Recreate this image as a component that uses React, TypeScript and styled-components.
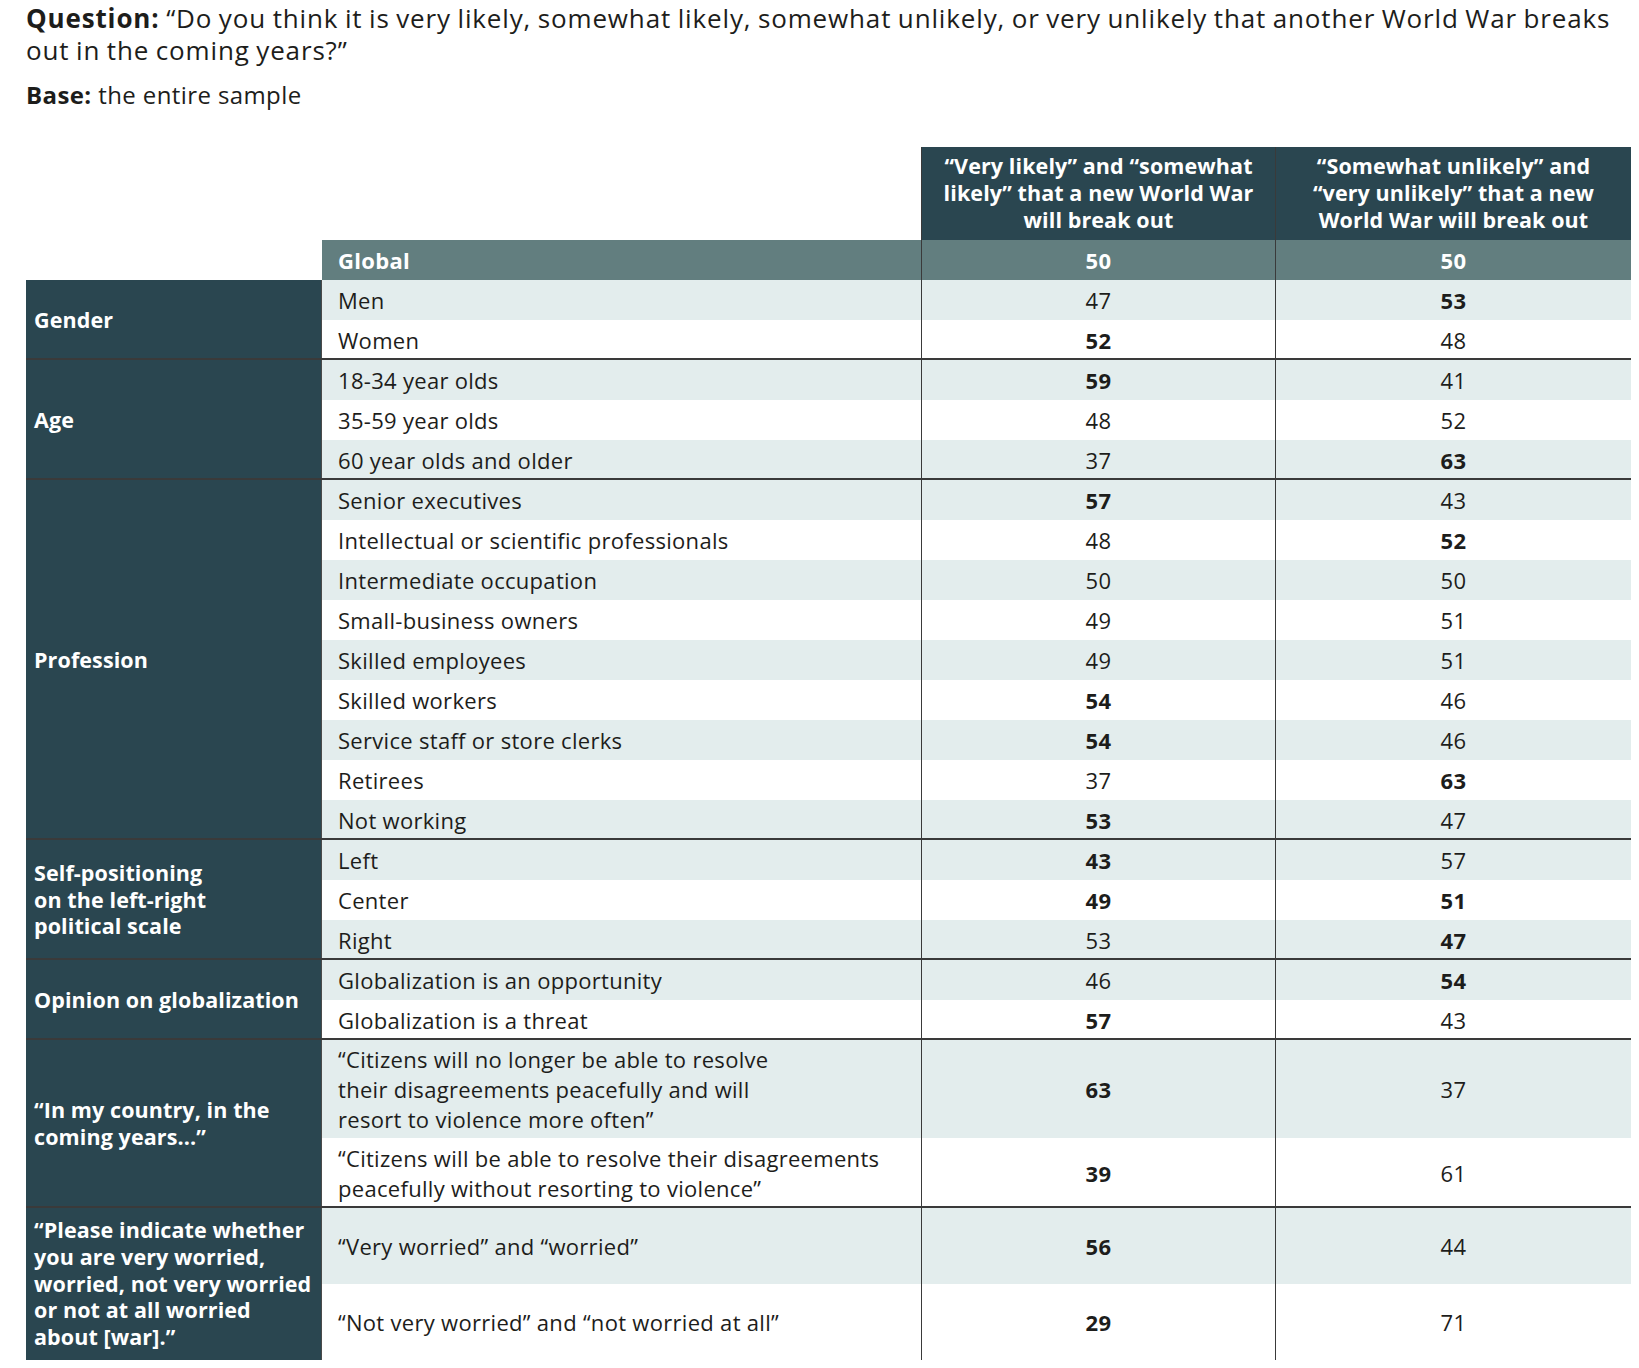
import React from 'react';
import styled, { createGlobalStyle } from 'styled-components';

const GlobalStyle = createGlobalStyle`
  body {
    margin: 0;
    background: #ffffff;
  }
`;

const DARK = '#2a4650';
const MID = '#627e7f';
const LIGHT = '#e3eded';
const LINE = '#3a3a3a';
const INK = '#1d1d1b';

const Page = styled.div`
  padding: 3px 8px 9px 26px;
  font-family: 'Open Sans', 'Liberation Sans', sans-serif;
  color: ${INK};
`;

const Question = styled.h1`
  margin: 0;
  font-size: 26px;
  line-height: 31.5px;
  font-weight: 500;
  letter-spacing: 0.85px;
  word-spacing: -1px;
`;

const Base = styled.p`
  margin: 14px 0 0;
  font-size: 24px;
  line-height: 30px;
  font-weight: 400;
  letter-spacing: 0.4px;
`;

const Strong = styled.strong`
  font-weight: 700;
`;

const Table = styled.div`
  margin-top: 37px;
  width: 1605px;
  letter-spacing: 0.3px;
`;

const Cols = styled.div`
  display: grid;
  grid-template-columns: 599px 354px 356px;
`;

const HeaderRow = styled(Cols)`
  margin-left: 296px;
`;

const HeaderCell = styled.div`
  background: ${DARK};
  color: #fff;
  font-weight: 700;
  font-size: 21.5px;
  line-height: 26.7px;
  letter-spacing: 0.1px;
  text-align: center;
  height: 93px;
  display: flex;
  align-items: center;
  justify-content: center;
  border-left: 1px solid ${LINE};
`;

const Blank = styled.div``;

const GlobalRow = styled(Cols)`
  margin-left: 296px;
  height: 40px;
  background: ${MID};
  color: #fff;
  font-weight: 700;
  font-size: 22px;
`;

const Group = styled.div`
  position: relative;
  display: flex;
  & + & {
    border-top: 2px solid ${LINE};
    margin-top: -2px;
  }
`;

const Category = styled.div`
  width: 296px;
  flex-shrink: 0;
  box-sizing: border-box;
  background: ${DARK};
  color: #fff;
  font-weight: 700;
  font-size: 21.5px;
  line-height: 26.7px;
  letter-spacing: 0.1px;
  padding: 0 6px 0 8px;
  display: flex;
  align-items: center;
  border-right: 1px solid #4a4a4a;
`;

const Rows = styled.div`
  flex: 1;
  display: flex;
  flex-direction: column;
`;

const Row = styled(Cols)<{ $shade: boolean; $h: number }>`
  height: ${p => p.$h}px;
  background: ${p => (p.$shade ? LIGHT : '#fff')};
  font-size: 22px;
`;

const Label = styled.div<{ $strong?: boolean }>`
  display: flex;
  align-items: center;
  padding-left: 16px;
  line-height: 30px;
  font-weight: ${p => (p.$strong ? 700 : 400)};
`;

const Value = styled.div<{ $bold?: boolean }>`
  display: flex;
  align-items: center;
  justify-content: center;
  border-left: 1px solid ${LINE};
  font-weight: ${p => (p.$bold ? 700 : 400)};
`;

type RowData = {
  label: React.ReactNode;
  a: number;
  b: number;
  ba?: boolean;
  bb?: boolean;
  h?: number;
};

type GroupData = {
  title: React.ReactNode;
  rows: RowData[];
};

const groups: GroupData[] = [
  {
    title: 'Gender',
    rows: [
      { label: 'Men', a: 47, b: 53, bb: true },
      { label: 'Women', a: 52, b: 48, ba: true },
    ],
  },
  {
    title: 'Age',
    rows: [
      { label: '18-34 year olds', a: 59, b: 41, ba: true },
      { label: '35-59 year olds', a: 48, b: 52 },
      { label: '60 year olds and older', a: 37, b: 63, bb: true },
    ],
  },
  {
    title: 'Profession',
    rows: [
      { label: 'Senior executives', a: 57, b: 43, ba: true },
      { label: 'Intellectual or scientific professionals', a: 48, b: 52, bb: true },
      { label: 'Intermediate occupation', a: 50, b: 50 },
      { label: 'Small-business owners', a: 49, b: 51 },
      { label: 'Skilled employees', a: 49, b: 51 },
      { label: 'Skilled workers', a: 54, b: 46, ba: true },
      { label: 'Service staff or store clerks', a: 54, b: 46, ba: true },
      { label: 'Retirees', a: 37, b: 63, bb: true },
      { label: 'Not working', a: 53, b: 47, ba: true },
    ],
  },
  {
    title: (
      <>
        Self-positioning
        <br />
        on the left-right
        <br />
        political scale
      </>
    ),
    rows: [
      { label: 'Left', a: 43, b: 57, ba: true },
      { label: 'Center', a: 49, b: 51, ba: true, bb: true },
      { label: 'Right', a: 53, b: 47, bb: true },
    ],
  },
  {
    title: 'Opinion on globalization',
    rows: [
      { label: 'Globalization is an opportunity', a: 46, b: 54, bb: true },
      { label: 'Globalization is a threat', a: 57, b: 43, ba: true },
    ],
  },
  {
    title: (
      <>
        “In my country, in the
        <br />
        coming years...”
      </>
    ),
    rows: [
      {
        label: (
          <>
            “Citizens will no longer be able to resolve
            <br />
            their disagreements peacefully and will
            <br />
            resort to violence more often”
          </>
        ),
        a: 63,
        b: 37,
        ba: true,
        h: 98,
      },
      {
        label: (
          <>
            “Citizens will be able to resolve their disagreements
            <br />
            peacefully without resorting to violence”
          </>
        ),
        a: 39,
        b: 61,
        ba: true,
        h: 70,
      },
    ],
  },
  {
    title: (
      <>
        “Please indicate whether
        <br />
        you are very worried,
        <br />
        worried, not very worried
        <br />
        or not at all worried
        <br />
        about [war].”
      </>
    ),
    rows: [
      { label: '“Very worried” and “worried”', a: 56, b: 44, ba: true, h: 76 },
      { label: '“Not very worried” and “not worried at all”', a: 29, b: 71, ba: true, h: 76 },
    ],
  },
];

export default function App() {
  return (
    <Page>
      <GlobalStyle />
      <Question>
        <Strong>Question:</Strong> “Do you think it is very likely, somewhat likely, somewhat unlikely, or very
        unlikely that another World War breaks out in the coming years?”
      </Question>
      <Base>
        <Strong>Base:</Strong> the entire sample
      </Base>

      <Table>
        <HeaderRow>
          <Blank />
          <HeaderCell>
            “Very likely” and “somewhat
            <br />
            likely” that a new World War
            <br />
            will break out
          </HeaderCell>
          <HeaderCell>
            “Somewhat unlikely” and
            <br />
            “very unlikely” that a new
            <br />
            World War will break out
          </HeaderCell>
        </HeaderRow>

        <GlobalRow>
          <Label $strong>Global</Label>
          <Value $bold>50</Value>
          <Value $bold>50</Value>
        </GlobalRow>

        {groups.map((g, gi) => (
          <Group key={gi}>
            <Category>{g.title}</Category>
            <Rows>
              {g.rows.map((r, ri) => (
                <Row key={ri} $shade={ri % 2 === 0} $h={r.h ?? 40}>
                  <Label>{r.label}</Label>
                  <Value $bold={r.ba}>{r.a}</Value>
                  <Value $bold={r.bb}>{r.b}</Value>
                </Row>
              ))}
            </Rows>
          </Group>
        ))}
      </Table>
    </Page>
  );
}
